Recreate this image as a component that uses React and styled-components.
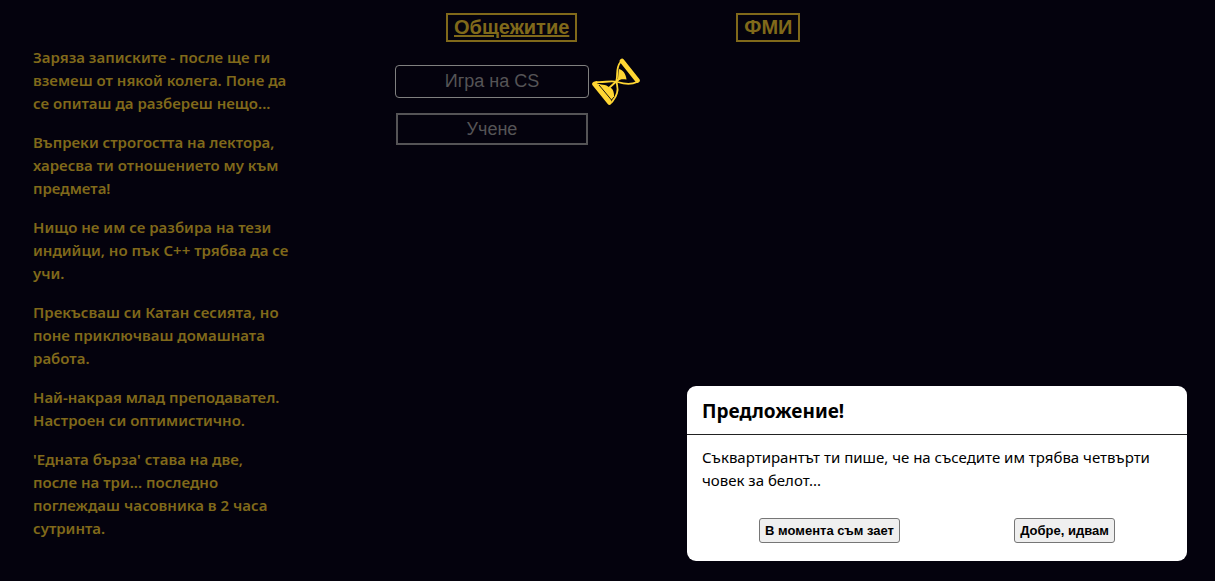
import React from 'react';
import styled, { createGlobalStyle } from 'styled-components';

const handwriting = '"Noto Sans", "Open Sans", sans-serif';
const sans = 'Arial, "Liberation Sans", sans-serif';

const GlobalStyle = createGlobalStyle`
  * { box-sizing: border-box; }
  body { margin: 0; background: #04020d; }
`;

const Page = styled.div`
  display: grid;
  grid-template-columns: 296px 1fr;
  min-height: 100vh;
  font-family: ${sans};
`;

const Log = styled.aside`
  padding: 46px 7px 24px 33px;
  display: flex;
  flex-direction: column;
  gap: 16px;
`;

const Entry = styled.p`
  margin: 0;
  font: 600 15px/23px ${handwriting};
  color: #80691a;
`;

const Main = styled.main`
  padding: 13px 0 0 99px;
`;

const Places = styled.nav`
  display: flex;
  gap: 159px;
  padding-left: 51px;
`;

const Place = styled.a`
  border: 2px solid #80691a;
  padding: 1px 6px;
  font-size: 20px;
  line-height: 23px;
  font-weight: bold;
  color: #80691a;
  text-decoration: ${(p) => (p.$current ? 'underline' : 'none')};
`;

const Actions = styled.div`
  display: flex;
  flex-direction: column;
  align-items: flex-start;
  gap: 15px;
  margin-top: 23px;
`;

const ActionRow = styled.div`
  display: flex;
  align-items: center;
  height: 33px;
  gap: 3px;
`;

const Action = styled.button`
  width: ${(p) => (p.$active ? 194 : 192)}px;
  height: ${(p) => (p.$active ? 33 : 32)}px;
  margin: 0 ${(p) => (p.$active ? 0 : 1)}px;
  padding: 0;
  border: ${(p) => (p.$active ? '1px solid #80807f' : '2px solid #555456')};
  border-radius: ${(p) => (p.$active ? 4 : 0)}px;
  background: transparent;
  color: #555456;
  font: 18px ${sans};
`;

const Hourglass = styled.svg`
  display: block;
  width: 48px;
  height: 48px;
  flex: none;
`;

const Dialog = styled.section`
  position: fixed;
  right: 28px;
  bottom: 20px;
  width: 500px;
  border-radius: 9px;
  background: #fff;
  color: #000;
`;

const DialogTitle = styled.h2`
  margin: 0;
  padding: 11px 15px 9px;
  border-bottom: 1px solid #222;
  font: 700 19px/28px ${handwriting};
`;

const DialogText = styled.p`
  margin: 0;
  padding: 11px 15px 0;
  font: 400 15px/23px ${handwriting};
`;

const Answers = styled.div`
  display: flex;
  justify-content: space-around;
  padding: 26px 15px 18px;
`;

const Answer = styled.button`
  height: 25px;
  padding: 0 5px;
  border: 1px solid #767676;
  border-radius: 3px;
  background: #efefef;
  color: #000;
  font: bold 13px ${sans};
`;

const entries = [
  'Заряза записките - после ще ги вземеш от някой колега. Поне да се опиташ да разбереш нещо...',
  'Въпреки строгостта на лектора, харесва ти отношението му към предмета!',
  'Нищо не им се разбира на тези индийци, но пък С++ трябва да се учи.',
  'Прекъсваш си Катан сесията, но поне приключваш домашната работа.',
  'Най-накрая млад преподавател. Настроен си оптимистично.',
  "'Едната бърза' става на две, после на три... последно поглеждаш часовника в 2 часа сутринта.",
];

export default function App() {
  return (
    <Page>
      <GlobalStyle />
      <Log>
        {entries.map((text) => (
          <Entry key={text}>{text}</Entry>
        ))}
      </Log>
      <Main>
        <Places>
          <Place href="#dorm" $current>Общежитие</Place>
          <Place href="#fmi">ФМИ</Place>
        </Places>
        <Actions>
          <ActionRow>
            <Action type="button" $active>Игра на CS</Action>
            <Hourglass viewBox="0 0 48 48" aria-hidden="true">
              <g stroke="#ffd633" fill="none" strokeLinecap="round" strokeLinejoin="round">
                <path d="M30 3L45.5 22.5M2.5 26L17.5 44.5" strokeWidth="4.6" />
                <path d="M28.5 4C23.5 10 26 17 24.5 22C24 26 27 30 25 35C24 39 23 40 20 44" strokeWidth="1.8" />
                <path d="M45 24C39 27 32 26 25.5 24C18 22 12 25 4 24" strokeWidth="1.8" />
                <path d="M17 30L27 21" strokeWidth="1.8" />
              </g>
              <path d="M27 11C31 12 34 16 34.5 21.5C31 21 28 21 25.5 23C26.5 19 26 16 27 11Z" fill="#ffd633" />
              <path d="M4 25C8 27 14 26 17.5 29.5C21.5 30 22.5 36 22 41L18 43Z" fill="#ffd633" />
              <path d="M7 27L19.5 42L22 39" fill="none" stroke="#04020d" strokeWidth="0.9" />
            </Hourglass>
          </ActionRow>
          <Action type="button">Учене</Action>
        </Actions>
      </Main>
      <Dialog role="dialog" aria-labelledby="offer-title">
        <DialogTitle id="offer-title">Предложение!</DialogTitle>
        <DialogText>
          Съквартирантът ти пише, че на съседите им трябва четвърти човек за белот...
        </DialogText>
        <Answers>
          <Answer type="button">В момента съм зает</Answer>
          <Answer type="button">Добре, идвам</Answer>
        </Answers>
      </Dialog>
    </Page>
  );
}
